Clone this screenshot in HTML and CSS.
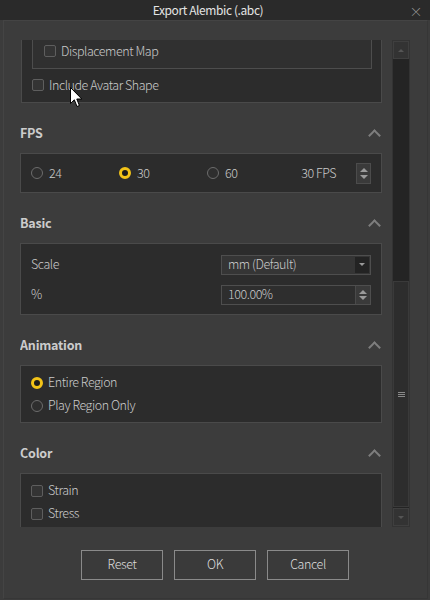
FILE: index.html
```html
<!DOCTYPE html>
<html>
<head>
<meta charset="utf-8">
<link rel="stylesheet" href="styles.css">
</head>
<body>
<div class="window">
  <div class="titlebar">
    <span></span>
    <span class="title">Export Alembic (.abc)</span>
    <span class="close">×</span>
  </div>
  <div class="client">
    <div class="main">
      <div class="scrollarea">
        <div class="box box-top">
          <div class="nested">
            <label class="row"><span class="check"></span><span class="txt">Displacement Map</span></label>
          </div>
          <label class="row row-avatar"><span class="check"></span><span class="txt">Include Avatar Shape</span></label>
        </div>

        <div class="header"><span class="txt">FPS</span><span class="chev"></span></div>
        <div class="box box-fps">
          <div class="fps-row">
            <label class="opt"><span class="radio"></span><span class="txt">24</span></label>
            <label class="opt"><span class="radio on"></span><span class="txt">30</span></label>
            <label class="opt"><span class="radio"></span><span class="txt">60</span></label>
            <div class="fps-value">
              <span class="txt">30 FPS</span>
              <span class="spin spin-fps"><span class="tri up"></span><span class="tri down"></span></span>
            </div>
          </div>
        </div>

        <div class="header"><span class="txt">Basic</span><span class="chev"></span></div>
        <div class="box box-basic">
          <div class="field-row">
            <span class="txt">Scale</span>
            <div class="combo"><span class="txt">mm (Default)</span><span class="combo-btn"><span class="tri down small"></span></span></div>
          </div>
          <div class="field-row">
            <span class="txt">%</span>
            <div class="spinbox"><span class="txt">100.00%</span><span class="spin spin-field"><span class="tri up"></span><span class="tri down"></span></span></div>
          </div>
        </div>

        <div class="header"><span class="txt">Animation</span><span class="chev"></span></div>
        <div class="box box-list box-anim">
          <label class="row"><span class="radio on"></span><span class="txt">Entire Region</span></label>
          <label class="row"><span class="radio"></span><span class="txt">Play Region Only</span></label>
        </div>

        <div class="header"><span class="txt">Color</span><span class="chev"></span></div>
        <div class="box box-list">
          <label class="row"><span class="check"></span><span class="txt">Strain</span></label>
          <label class="row"><span class="check"></span><span class="txt">Stress</span></label>
        </div>
      </div>
      <div class="scrollbar">
        <div class="sb-btn"><span class="tri up small dim"></span></div>
        <div class="sb-track">
          <div class="sb-thumb"><span class="grip"></span></div>
        </div>
        <div class="sb-btn"><span class="tri down small dim"></span></div>
      </div>
    </div>
    <div class="buttons">
      <button class="btn"><span class="txt">Reset</span></button>
      <button class="btn"><span class="txt">OK</span></button>
      <button class="btn"><span class="txt">Cancel</span></button>
    </div>
  </div>
</div>
<svg class="cursor" width="13" height="21" viewBox="0 0 13 21">
  <path d="M0.5 0.5 L0.5 16.5 L4.3 12.8 L7 19.5 L9.4 18.5 L6.8 12 L11.8 12 Z" fill="#ffffff" stroke="#000000" stroke-width="1"/>
</svg>
</body>
</html>
```

FILE: styles.css
```css
* { box-sizing: border-box; }
html, body { margin: 0; padding: 0; }
body {
  width: 430px;
  height: 600px;
  background: #3c3c3c;
  font-family: "Noto Sans CJK KR", "Noto Sans", sans-serif;
  font-size: 12.5px;
  font-weight: 300;
  letter-spacing: -0.45px;
  color: #cacaca;
  position: relative;
  overflow: hidden;
}
.txt { margin-bottom: 2px; }
.window {
  width: 430px;
  height: 600px;
  display: flex;
  flex-direction: column;
}
.titlebar {
  height: 20px;
  flex: none;
  background: #2a2a2a;
  display: grid;
  grid-template-columns: 1fr auto 1fr;
  align-items: center;
  color: #e4e4e4;
}
.title {
  line-height: 20px;
  padding-bottom: 1px;
  margin-right: 14px;
  font-weight: 400;
  font-size: 12px;
  letter-spacing: -0.4px;
}
.close {
  justify-self: end;
  margin-right: 8px;
  color: #9a9a9a;
  font-size: 13px;
  line-height: 20px;
}
.client {
  flex: 1;
  margin: 0 2px 1px 3px;
  border-left: 1px solid #444;
  border-top: 1px solid #444;
  border-right: 1px solid #363636;
  border-bottom: 1px solid #363636;
  background: #3c3c3c;
  padding-top: 19px;
  display: flex;
  flex-direction: column;
}
.main {
  display: flex;
  height: 487px;
  padding-left: 16px;
}
.scrollarea {
  width: 362px;
  height: 487px;
  overflow: hidden;
}
.box {
  background: #2c2c2c;
  border: 1px solid #4a4a4a;
}
.box-top {
  border-top: none;
  padding: 0 0 6px 10px;
  height: 63px;
  width: 361px;
  margin-left: 1px;
}
.nested {
  width: 340px;
  background: #303030;
  border: 1px solid #4d4d4d;
  border-top: none;
  padding: 0 0 6px 11px;
  height: 29px;
}
.row {
  display: flex;
  align-items: center;
  gap: 5px;
  height: 22px;
}
.row-avatar { margin-top: 5px; }
.check {
  width: 12px;
  height: 12px;
  border: 1px solid #5e5e5e;
  border-radius: 2px;
  background: #343434;
  flex: none;
}
.radio {
  width: 12px;
  height: 12px;
  border: 1px solid #6c6c6c;
  border-radius: 50%;
  background: #2e2e2e;
  flex: none;
}
.radio.on {
  border: 3px solid #f2c318;
  background: #1c1c1c;
}
.header {
  display: flex;
  justify-content: space-between;
  align-items: center;
  height: 20px;
  margin: 20px 0 10px;
  font-weight: bold;
  color: #cccccc;
  font-size: 12.5px;
  letter-spacing: -0.2px;
}
.chev {
  width: 9px;
  height: 9px;
  border-left: 2px solid #7e7e7e;
  border-top: 2px solid #7e7e7e;
  transform: rotate(45deg);
  margin: 4px 3px 0 0;
}
.box-fps {
  height: 40px;
  padding-left: 10px;
  padding-right: 10px;
  display: flex;
  align-items: center;
}
.fps-row {
  display: flex;
  align-items: center;
  width: 100%;
}
.opt {
  width: 88px;
  display: flex;
  align-items: center;
  gap: 6px;
}
.fps-value {
  margin-left: auto;
  display: flex;
  align-items: center;
  gap: 20px;
}
.spin {
  display: flex;
  flex-direction: column;
  align-items: center;
  justify-content: center;
  gap: 3px;
}
.spin-fps {
  width: 15px;
  height: 21px;
  background: #3a3a3a;
  border: 1px solid #4c4c4c;
}
.tri {
  width: 0;
  height: 0;
  border-left: 4px solid transparent;
  border-right: 4px solid transparent;
}
.tri.up { border-bottom: 4px solid #9a9a9a; }
.tri.down { border-top: 4px solid #9a9a9a; }
.tri.small { border-left-width: 3px; border-right-width: 3px; }
.tri.small.up { border-bottom-width: 3px; }
.tri.small.down { border-top-width: 3px; }
.tri.dim.up { border-bottom-color: #555; }
.tri.dim.down { border-top-color: #555; }
.box-basic {
  padding: 10px 10px 10px 10px;
  display: flex;
  flex-direction: column;
  gap: 10px;
}
.field-row {
  display: grid;
  grid-template-columns: 1fr 150px;
  align-items: center;
  height: 20px;
}
.combo, .spinbox {
  height: 20px;
  border: 1px solid #4e4e4e;
  background: #353535;
  display: flex;
  align-items: center;
  justify-content: space-between;
  padding-left: 6px;
  color: #cacaca;
}
.spinbox { background: #2e2e2e; }
.combo-btn {
  width: 14px;
  height: 16px;
  margin-right: 1px;
  background: #232323;
  display: flex;
  align-items: center;
  justify-content: center;
}
.spin-field {
  width: 15px;
  height: 18px;
  background: #3a3a3a;
  border-left: 1px solid #4a4a4a;
  gap: 2px;
}
.spin-field .tri { border-left-width: 4px; border-right-width: 4px; }
.box-list {
  padding: 5px 10px 4px 10px;
}
.box-anim { padding-bottom: 5px; }
.box-list .row { height: 23px; gap: 5px; }
.scrollbar {
  margin-left: 10px;
  width: 18px;
  height: 487px;
  display: flex;
  flex-direction: column;
  background: #242424;
  border: 1px solid #333;
}
.sb-btn {
  height: 18px;
  flex: none;
  background: #333333;
  border: 1px solid #3f3f3f;
  display: flex;
  align-items: center;
  justify-content: center;
}
.sb-track {
  flex: 1;
  display: flex;
  flex-direction: column;
  justify-content: flex-end;
  padding-bottom: 1px;
}
.sb-thumb {
  height: 226px;
  background: #2d2d2d;
  border: 1px solid #3a3a3a;
  display: flex;
  align-items: center;
  justify-content: center;
}
.grip {
  width: 7px;
  height: 5px;
  border-top: 1px solid #888;
  border-bottom: 1px solid #888;
  position: relative;
}
.grip::after {
  content: "";
  display: block;
  height: 1px;
  margin-top: 1px;
  background: #888;
}
.buttons {
  display: flex;
  justify-content: center;
  gap: 11px;
  margin-top: 23px;
  padding-right: 1px;
}
.btn {
  width: 82px;
  height: 30px;
  background: #3a3a3a;
  border: 1px solid #8a8a8a;
  color: #dcdcdc;
  font-family: "Noto Sans CJK KR", "Noto Sans", sans-serif;
  font-size: 12.5px;
  font-weight: 300;
  letter-spacing: -0.4px;
  padding: 0 0 3px;
}
.cursor {
  position: absolute;
  left: 70px;
  top: 87px;
}
```
